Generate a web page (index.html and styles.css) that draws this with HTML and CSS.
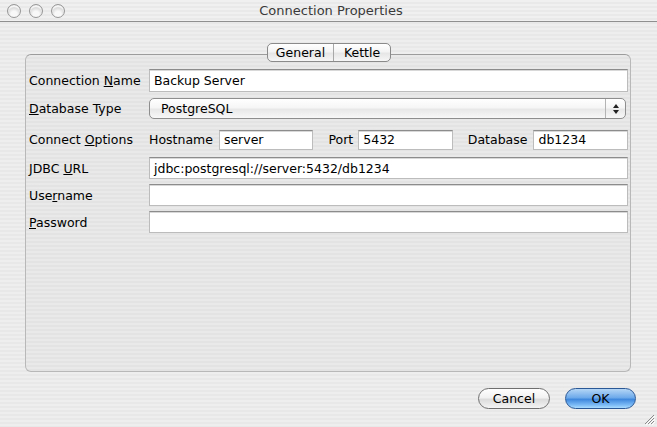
FILE: index.html
```html
<!DOCTYPE html>
<html>
<head>
<meta charset="utf-8">
<title>Connection Properties</title>
<link rel="stylesheet" href="styles.css">
</head>
<body>
<div class="window">
  <div class="titlebar">
    <div class="lights">
      <span class="light"></span><span class="light"></span><span class="light"></span>
    </div>
    <div class="title">Connection Properties</div>
  </div>
  <div class="content">
    <div class="tabs">
      <span class="tab tab-general">General</span><span class="tab tab-kettle">Kettle</span>
    </div>
    <div class="panel">
      <div class="row row-name">
        <span class="label">Connection <u>N</u>ame</span>
        <div class="input">Backup Server</div>
      </div>
      <div class="row row-type">
        <span class="label"><u>D</u>atabase Type</span>
        <div class="select">
          <span class="select-text">PostgreSQL</span>
          <span class="select-arrows">
            <svg width="8" height="12" viewBox="0 0 8 12"><path d="M4 1 L7 5 L1 5 Z" fill="#222"/><path d="M1 7 L7 7 L4 11 Z" fill="#222"/></svg>
          </span>
        </div>
      </div>
      <div class="row row-options">
        <span class="label">Connect <u>O</u>ptions</span>
        <div class="options">
          <span class="sublabel">Hostname</span>
          <div class="input small">server</div>
          <span class="sublabel port">Port</span>
          <div class="input small">5432</div>
          <span class="sublabel db">Database</span>
          <div class="input small">db1234</div>
        </div>
      </div>
      <div class="row row-jdbc">
        <span class="label">JDBC <u>U</u>RL</span>
        <div class="input">jdbc:postgresql://server:5432/db1234</div>
      </div>
      <div class="row row-user">
        <span class="label">Use<u>r</u>name</span>
        <div class="input"></div>
      </div>
      <div class="row row-pass">
        <span class="label"><u>P</u>assword</span>
        <div class="input"></div>
      </div>
    </div>
    <div class="buttons">
      <span class="btn btn-cancel">Cancel</span>
      <span class="btn btn-ok">OK</span>
    </div>
  </div>
  <svg class="grip" width="12" height="12" viewBox="0 0 12 12">
    <path d="M11 2 L2 11 M11 5 L5 11 M11 8 L8 11" stroke="#8a8a8a" stroke-width="1"/>
    <path d="M12 3 L3 12 M12 6 L6 12 M12 9 L9 12" stroke="#fff" stroke-width="1"/>
  </svg>
</div>
</body>
</html>
```

FILE: styles.css
```css
* { box-sizing: border-box; }
html, body { margin: 0; padding: 0; }
body {
  width: 657px;
  height: 427px;
  overflow: hidden;
  font-family: "DejaVu Sans", "Liberation Sans", sans-serif;
  font-size: 12.5px;
  color: #000;
}
.window {
  position: relative;
  width: 657px;
  height: 427px;
  background: repeating-linear-gradient(to bottom, #eeeeee 0 2px, #e8e8e8 2px 4px);
}
.titlebar {
  height: 22px;
  border-bottom: 1px solid #8f8f8f;
  display: flex;
  align-items: center;
  position: relative;
  background: repeating-linear-gradient(to bottom, #f0f0f0 0 2px, #e9e9e9 2px 4px);
}
.lights {
  display: flex;
  gap: 8px;
  padding-left: 7px;
  padding-top: 1px;
}
.light {
  width: 14px;
  height: 14px;
  border-radius: 50%;
  border: 1px solid #979797;
  background: radial-gradient(circle at 50% 78%, #f8f8f8 0 28%, #d2d2d2 68%, #b6b6b6 100%);
  box-shadow: inset 0 2px 1px rgba(255,255,255,0.85);
}
.title {
  flex: 1;
  text-align: center;
  font-size: 13px;
  color: #3a3a3a;
  margin-left: -60px;
}
.content {
  padding: 21px 26px 0 25px;
  display: flex;
  flex-direction: column;
}
.tabs {
  align-self: center;
  display: flex;
  height: 19px;
  margin-bottom: -8px;
  margin-left: 2px;
  position: relative;
  z-index: 1;
  border: 1px solid #8a8a8a;
  border-radius: 5px;
  background: linear-gradient(to bottom, #ffffff 0%, #f4f4f4 45%, #e6e6e6 55%, #f6f6f6 100%);
  overflow: hidden;
}
.tab {
  display: flex;
  align-items: center;
  justify-content: center;
  font-size: 12.5px;
  line-height: 17px;
}
.tab-general { width: 66px; border-right: 1px solid #a8a8a8; }
.tab-kettle { width: 56px; }
.panel {
  height: 318px;
  border: 1px solid #b8b8b8;
  border-top-color: #9c9c9c;
  border-radius: 6px;
  background: repeating-linear-gradient(to bottom, #e9e9e9 0 2px, #e3e3e3 2px 4px);
  padding: 14px 2px 0 3px;
  display: flex;
  flex-direction: column;
}
.row {
  display: flex;
  align-items: center;
}
.label {
  width: 120px;
  flex: none;
  white-space: nowrap;
}
.input {
  flex: 1;
  height: 22px;
  background: #fff;
  border: 1px solid #bcbcbc;
  border-top-color: #8c8c8c;
  box-shadow: inset 0 1px 0 #d8d8d8;
  padding: 0 4px;
  display: flex;
  align-items: center;
  white-space: nowrap;
}
.row-name .input { height: 23px; }
.row-type { margin-top: 6px; }
.row-options { margin-top: 9px; height: 23px; }
.row-jdbc { margin-top: 6px; }
.row-user { margin-top: 5px; }
.row-pass { margin-top: 5px; }
.select {
  flex: 1;
  height: 21px;
  margin-right: 2px;
  display: flex;
  align-items: center;
  border: 1px solid #8e8e8e;
  border-radius: 5px;
  background: linear-gradient(to bottom, #ffffff 0%, #f6f6f6 45%, #e8e8e8 55%, #f8f8f8 100%);
}
.select-text {
  flex: 1;
  padding-left: 11px;
}
.select-arrows {
  width: 20px;
  height: 100%;
  border-left: 1px solid #b4b4b4;
  display: flex;
  align-items: center;
  justify-content: center;
}
.options {
  flex: 1;
  display: flex;
  align-items: center;
}
.sublabel { margin-right: 6px; white-space: nowrap; }
.sublabel.port { margin-left: 15px; margin-right: 5px; }
.sublabel.db { margin-left: 15px; margin-right: 6px; }
.input.small {
  height: 20px;
  flex: 1;
}
.buttons {
  display: flex;
  justify-content: flex-end;
  gap: 15px;
  margin-top: 16px;
  margin-right: -5px;
}
.btn {
  height: 21px;
  border-radius: 11px;
  display: flex;
  align-items: center;
  justify-content: center;
  font-size: 12.5px;
}
.btn-cancel {
  width: 72px;
  border: 1px solid #6f6f6f;
  background: linear-gradient(to bottom, #ffffff 0%, #f2f2f2 45%, #dcdcdc 55%, #f4f4f4 100%);
}
.btn-ok {
  width: 71px;
  border: 1px solid #2a5896;
  background: linear-gradient(to bottom, #b5d6f6 0%, #6eaaea 45%, #3f88dd 55%, #7ebcf7 85%, #aadcff 100%);
}
.grip {
  position: absolute;
  right: 2px;
  bottom: 2px;
}
```
